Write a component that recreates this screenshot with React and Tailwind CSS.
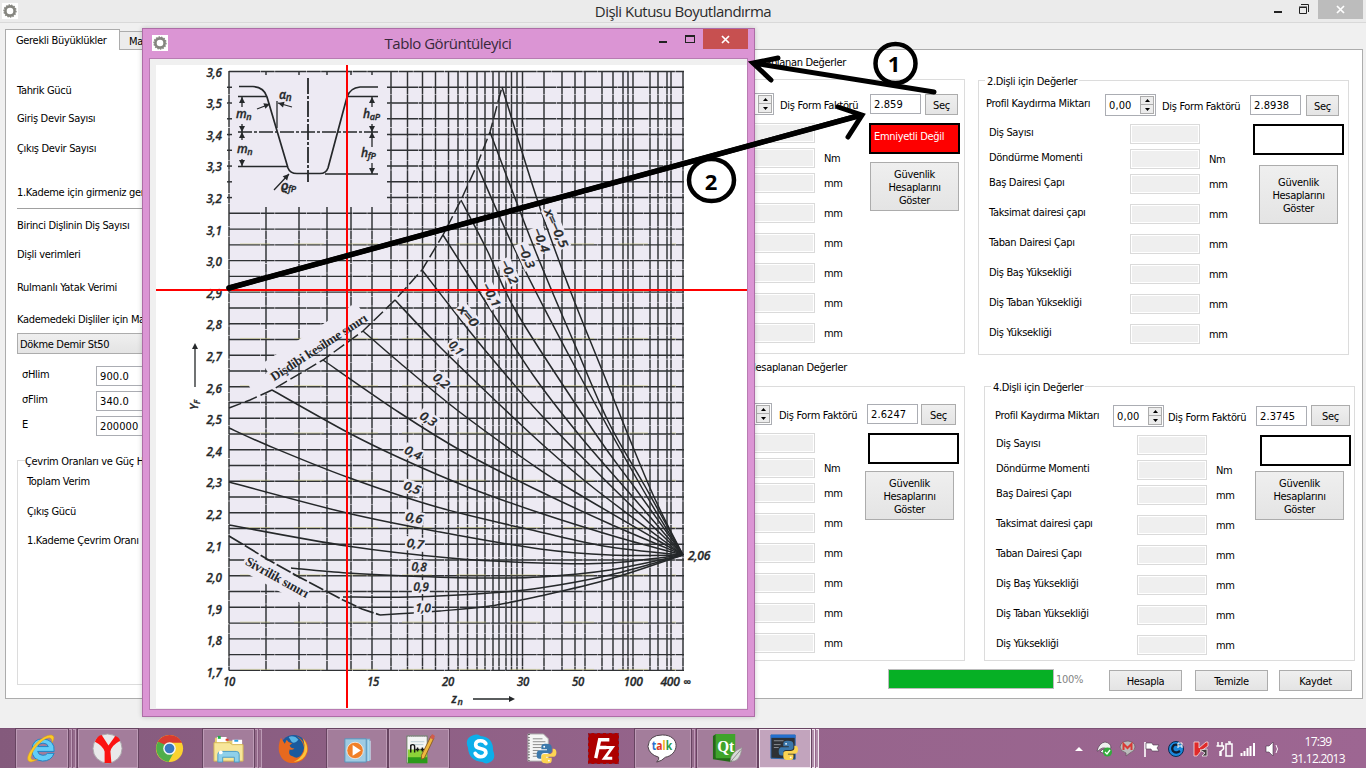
import React from "react";

const ROWS = [
  ["Diş Sayısı", "", "h-[25px]"],
  ["Döndürme Momenti", "Nm", "h-[25px]"],
  ["Baş Dairesi Çapı", "mm", "h-[30px]"],
  ["Taksimat dairesi çapı", "mm", "h-[30px]"],
  ["Taban Dairesi Çapı", "mm", "h-[30px]"],
  ["Diş Baş Yüksekliği", "mm", "h-[30px]"],
  ["Diş Taban Yüksekliği", "mm", "h-[30px]"],
  ["Diş Yüksekliği", "mm", "h-[30px]"],
];

const Label = ({ className = "", children }) => (
  <div className={`h-4 leading-[18px] whitespace-nowrap shrink-0 ${className}`}>{children}</div>
);

const Button = ({ className = "", children }) => (
  <button
    className={`shrink-0 border border-[#acacac] bg-linear-to-b from-[#efefef] to-[#e4e4e4] pt-px text-center leading-[13px] ${className}`}
  >
    {children}
  </button>
);

const TextBox = ({ className = "", children }) => (
  <div className={`h-5 shrink-0 border border-[#abadb3] bg-white pl-[3px] leading-[19px] tracking-[0.1px] ${className}`}>{children}</div>
);

const Spinner = () => (
  <div className="flex h-[22px] w-[51px] shrink-0 border border-[#abadb3] bg-white">
    <div className="w-[34px] shrink-0 pl-[3px] leading-[22px] tracking-[0.1px]">0,00</div>
    <div className="mt-px flex h-[18px] w-[14px] shrink-0 flex-col border border-[#acacac] bg-[#ececec]">
      <div className="flex h-2 items-center justify-center border-b border-[#acacac]">
        <svg width="5" height="3"><path d="M2.5 0L5 3H0z" /></svg>
      </div>
      <div className="flex h-2 items-center justify-center">
        <svg width="5" height="3"><path d="M2.5 3L5 0H0z" /></svg>
      </div>
    </div>
  </div>
);

function GearGroup({ box, legend, top, profile, formLabel, value, pick, labels, units, status, statusText, safety }) {
  return (
    <div className={`relative h-[275px] shrink-0 border border-[#dcdcdc] ${box}`}>
      <Label className="absolute -top-[8px] left-[6px] bg-white px-[2px]">{legend}</Label>
      <div className={`flex h-[22px] items-start ${top}`}>
        <Label className={profile}>Profil Kaydırma Miktarı</Label>
        <Spinner />
        <Label className={`mt-[4px] ${formLabel}`}>Diş Form Faktörü</Label>
        <TextBox className="mt-px w-[51px]">{value}</TextBox>
        <Button className={`h-[21px] ${pick}`}>Seç</Button>
      </div>
      <div className="mt-2 flex items-start">
        <div className={units}>
          {ROWS.map(([name, unit, h]) => (
            <div key={name} className={`flex items-start ${h}`}>
              <Label className={labels}>{name}</Label>
              <div className="h-5 w-[70px] shrink-0 border border-[#dadada] bg-white p-px">
                <div className="h-full bg-[#efefef]" />
              </div>
              <Label className="mt-[2px] ml-[9px]">{unit}</Label>
            </div>
          ))}
        </div>
        <div>
          <div className={`h-[31px] w-[91px] border-2 border-black pl-[3px] leading-[24px] ${status}`}>{statusText}</div>
          <Button className={safety}>
            Güvenlik
            <br />
            Hesaplarını
            <br />
            Göster
          </Button>
        </div>
      </div>
    </div>
  );
}

const Gear = () => (
  <div className="flex h-4 w-4 items-center justify-center bg-white">
    <svg width="16" height="16" viewBox="0 0 16 16">
      <circle cx="8" cy="8" r="4.6" fill="none" stroke="#85857f" strokeWidth="2.6" />
      <circle cx="8" cy="8" r="6" fill="none" stroke="#85857f" strokeWidth="1.4" strokeDasharray="1.5 1.1" />
    </svg>
  </div>
);

/* ---------- diagram ---------- */
const VX = [229, 266, 299, 327, 351, 372, 391, 407.5, 422.5, 435.5, 448.5, 458, 467.5, 477, 485, 493, 499, 506, 511.5, 517, 522.5, 544, 562, 575, 585, 602, 613, 623, 628, 633, 650, 658, 667, 671, 683];
const HY = Array.from({ length: 39 }, (_, i) => 71.5 + i * 15.76);
const CURVES = [
  [[502, 87], [538, 202], [570, 290], [600, 365], [650, 488], [683, 555]],
  [[490, 132], [535, 250], [575, 345], [609, 423], [646, 488], [683, 555]],
  [[477, 165], [515, 250], [573, 363], [642, 488], [683, 555]],
  [[461, 200], [487, 250], [517, 313], [595, 433], [635, 488], [683, 555]],
  [[443, 235], [478, 290], [533, 375], [580, 436], [625, 488], [683, 555]],
  [[422, 270], [467, 328], [500, 368], [543, 417], [613, 488], [683, 555]],
  [[395, 300], [430, 337], [477, 383], [543, 445], [595, 489], [683, 555]],
  [[363, 331], [400, 363], [457, 410], [530, 463], [575, 492], [683, 555]],
  [[323, 360], [400, 413], [465, 453], [533, 488], [610, 524], [683, 555]],
  [[272, 390], [347, 432], [400, 458], [470, 488], [540, 513], [620, 538], [683, 555]],
  [[229, 428], [267, 445], [347, 477], [437, 507], [540, 532], [610, 547], [683, 555]],
  [[229, 482], [347, 513], [440, 532], [540, 549], [610, 555], [683, 555]],
  [[229, 525], [347, 546], [450, 558], [540, 563], [610, 563], [683, 555]],
  [[291, 568], [347, 573], [407, 576], [480, 578], [540, 577], [610, 570], [683, 555]],
  [[343, 597], [410, 597], [490, 593], [540, 588], [610, 575], [683, 555]],
  [[380, 615], [413, 613], [440, 611], [490, 606], [540, 596], [610, 579], [683, 555]],
];
const smooth = (p) => {
  let d = `M${p[0][0]} ${p[0][1]}`;
  for (let i = 0; i < p.length - 1; i++) {
    const a = p[i - 1] || p[i];
    const b = p[i];
    const c = p[i + 1];
    const e = p[i + 2] || c;
    d += `C${b[0] + (c[0] - a[0]) / 6} ${b[1] + (c[1] - a[1]) / 6} ${c[0] - (e[0] - b[0]) / 6} ${c[1] - (e[1] - b[1]) / 6} ${c[0]} ${c[1]}`;
  }
  return d;
};
const YL = ["3,6", "3,5", "3,4", "3,3", "3,2", "3,1", "3,0", "2,9", "2,8", "2,7", "2,6", "2,5", "2,4", "2,3", "2,2", "2,1", "2,0", "1,9", "1,8", "1,7"];
const XL = [["10", 229], ["15", 373], ["20", 448], ["30", 523], ["50", 578], ["100", 633], ["400", 670]];
const TAGS = [
  ["x=−0,5", 556, 228, 66, 44], ["−0,4", 541, 240, 68, 28], ["−0,3", 526, 256, 66, 28], ["−0,2", 509, 272, 64, 28], ["−0,1", 491, 295, 62, 28],
  ["x=0", 468, 316, 50, 27], ["0,1", 456, 348, 46, 18], ["0,2", 441, 381, 40, 20], ["0,3", 428, 419, 32, 20], ["0,4", 413, 453, 26, 20],
  ["0,5", 412, 488, 20, 20], ["0,6", 414, 518, 12, 20], ["0,7", 415, 544, 6, 20], ["0,8", 419, 567, 4, 18], ["0,9", 421, 587, 2, 18], ["1,0", 423, 608, 2, 18],
];

const Tip = ({ x, y, r }) => <path d="M0 0L-3 -6H3z" transform={`translate(${x} ${y}) rotate(${r})`} />;

function Diagram() {
  const ink = "#25282a";
  return (
    <svg width="591" height="643" viewBox="156 65 591 643" className="block bg-white font-['Open_Sans',sans-serif]">
      <rect x="229" y="71" width="455" height="600" fill="#edeaf3" />
      <g stroke={ink} strokeWidth="1.45" opacity="0.95">
        {VX.map((x) => <line key={x} x1={x} x2={x} y1={x > 229 && x < 385 ? 207 : 71} y2="670.5" strokeDasharray="23 0.6 9 0.5" />)}
        {HY.map((y) => <line key={y} x1={y < 205 && y > 73 ? 387 : 229} x2="684" y1={y} y2={y} strokeDasharray="31 0.6 14 0.5" />)}
        {HY.slice(1, 9).map((y) => <line key={y} x1="227" x2="232" y1={y} y2={y} />)}
        {[266, 299, 327, 351, 372].map((x) => <line key={x} x1={x} x2={x} y1="71" y2="75" />)}
      </g>
      <g stroke="#c9c77b" strokeWidth="1" opacity="0.5" strokeDasharray="30 24">
        {HY.filter((_, i) => i % 3 === 2 && i > 9).map((y) => <line key={y} x1="240" x2="676" y1={y - 1} y2={y - 1} />)}
      </g>
      <g fill="#edeaf3">
        <rect x="263" y="330" width="112" height="20" transform="rotate(-33 319 348)" />
        <rect x="250" y="375" width="30" height="18" transform="rotate(-28 265 384)" />
        <rect x="240" y="567" width="72" height="21" transform="rotate(29 276 577)" />
      </g>
      <g fill="none" stroke={ink} strokeWidth="1.5">
        {CURVES.map((c, i) => <path key={i} d={smooth(c)} />)}
        <polyline points="229,408 250,400 272,390 323,360 363,331 395,300 422,270 443,235 461,200 477,165 490,132 502,87" strokeDasharray="13 4" />
        <polyline points="229,536 267,559 299,577 343,600 362,609 380,615" strokeDasharray="16 2.5" strokeWidth="1.7" />
      </g>
      <g fill={ink} stroke={ink} strokeWidth="0.3" fontSize="12" fontStyle="italic" fontWeight="600" textAnchor="middle">
        {TAGS.map(([t, x, y, r, w]) => (
          <g key={t} transform={`translate(${x} ${y}) rotate(${r})`}>
            <rect x={-w / 2} y="-7" width={w} height="14" fill="#edeaf3" stroke="none" />
            <text y="4" textLength={w - 3} lengthAdjust="spacingAndGlyphs">{t}</text>
          </g>
        ))}
        {YL.map((t, i) => <text key={t} x="214" y={76.5 + i * 31.6} textLength="15" lengthAdjust="spacingAndGlyphs">{t}</text>)}
        {XL.map(([t, x]) => <text key={t} x={x} y="686" textLength={t.length > 2 ? 19 : 12} lengthAdjust="spacingAndGlyphs">{t}</text>)}
        <text x="687" y="686" fontSize="11">∞</text>
        <text x="699" y="560" textLength="22" lengthAdjust="spacingAndGlyphs">2,06</text>
        <text x="454" y="703" fontSize="12">z</text>
        <text x="460" y="705" fontSize="9">n</text>
        <text x="194" y="409" fontSize="11" transform="rotate(-90 194 405)">Y<tspan fontSize="8" dy="2">F</tspan></text>
      </g>
      <g fill={ink} className="font-['Liberation_Serif',serif]" fontWeight="700" fontSize="13" textAnchor="middle">
        <text transform="translate(321 351) rotate(-33)" textLength="112">Dişdibi kesilme sınırı</text>
        <text transform="translate(275 581) rotate(29)" textLength="70">Sivrilik sınırı</text>
      </g>
      <g fill="none" stroke={ink} strokeWidth="1.3">
        <path d="M195 387V346M473 699H510" />
        <path d="M239 86.5H253Q264 87 267 97L288 168Q290 173.5 297 173.5H320Q326 173.5 328 168L347 97Q350 88 360 87H378" strokeWidth="1.7" />
        <path d="M238 96.5H267M347 96.5H378M238 166.5H287M325 174H378" />
        <path d="M238 132H378" strokeDasharray="14 2 3 2" />
        <path d="M308 78V182" strokeDasharray="16 2 3 2" strokeWidth="1.8" />
        <path d="M242 107V97M242 124V140M242 159V166M372 107V97M372 124V147M372 163V174" />
        <path d="M257 109L270 104M292 107L278 103M274 190L289 174M277 101V128" />
      </g>
      <g fill={ink}>
        <Tip x={195} y={343} r={180} />
        <Tip x={515} y={699} r={-90} />
        <Tip x={242} y={97} r={180} /><Tip x={372} y={97} r={180} />
        <Tip x={242} y={132} r={0} /><Tip x={372} y={132} r={0} />
        <Tip x={242} y={132} r={180} /><Tip x={372} y={132} r={180} />
        <Tip x={242} y={166} r={0} /><Tip x={372} y={174} r={0} />
        <Tip x={270} y={104} r={-110} /><Tip x={278} y={103} r={105} /><Tip x={289} y={174} r={-137} />
      </g>
      <g fill={ink} stroke={ink} strokeWidth="0.3" fontStyle="italic" fontWeight="600" fontSize="12">
        <text x="236" y="118">m<tspan fontSize="9" dy="2">n</tspan></text>
        <text x="237" y="153">m<tspan fontSize="9" dy="2">n</tspan></text>
        <text x="279" y="99">α<tspan fontSize="10" dy="2">n</tspan></text>
        <text x="363" y="118">h<tspan fontSize="9" dy="2">aP</tspan></text>
        <text x="361" y="157">h<tspan fontSize="9" dy="2">fP</tspan></text>
        <text x="281" y="190">ϱ<tspan fontSize="9" dy="2">fP</tspan></text>
      </g>
      <path d="M156 290H747M347 65V708" stroke="#fe0000" strokeWidth="2" />
    </svg>
  );
}

/* ---------- taskbar icons ---------- */
const Python = ({ x = 0, y = 0, s = 1 }) => (
  <g transform={`translate(${x} ${y}) scale(${s})`}>
    <path d="M10 0C6 0 5 1 5 4V6H11V7H3C1 7 0 9 0 12S1 16 3 16H5V13C5 11 6 10 8 10H13C15 10 16 9 16 7V4C16 1 14 0 10 0z" fill="#3b77ab" />
    <path d="M11 21C15 21 16 20 16 17V15H10V14H18C20 14 21 12 21 9.500S20 5.500 18 5.500H17V8C17 10 15 11 13 11H8C6 11 5 12 5 14V17C5 20 7 21 11 21z" fill="#fcd452" />
    <circle cx="8" cy="3.300" r="1" fill="#fff" /><circle cx="13" cy="18" r="1" fill="#fff" />
  </g>
);

const ICONS = {
  ie: (
    <>
      <path d="M29 19H12Q13 23 17.500 23Q21 23 22 21H29Q26 29 17 29Q6 28 6 17Q7 6 17 6Q30 7 29 19zM12 14H23Q22 10.500 17.500 10.500Q13 10.500 12 14z" fill="#63cdf7" stroke="#1f83c4" />
      <path d="M27 10Q31 3 26 2Q19 2 10 11Q0 23 2 28Q4 32 12 27Q5 29 5 25Q7 16 17 8Q27 1 27 10z" fill="#fbc926" stroke="#d99b12" strokeWidth=".5" />
    </>
  ),
  yandex: (
    <>
      <circle cx="16" cy="16" r="15" fill="#e9e9ea" stroke="#a9a4a9" />
      <path d="M3 9Q6 2 10 2L17 13L24 3Q28 4 29 8Q20 13 19 19L20 31H13V19Q11 13 3 9z" fill="#fb1312" />
    </>
  ),
  chrome: (
    <>
      <circle cx="16" cy="16" r="14" fill="#fbd22f" />
      <path d="M16 16L4 9Q8 2 16 2Q25 2 29 10H16z" fill="#d93b2f" />
      <path d="M4 9Q0 17 5 24Q9 29 15 30L21 19L16 16z" fill="#4fae4a" />
      <path d="M4 9L11 20L16 14z" fill="#4fae4a" />
      <circle cx="16" cy="16" r="6.500" fill="#f3f5f7" /><circle cx="16" cy="16" r="5" fill="#3778c2" />
    </>
  ),
  explorer: (
    <>
      <path d="M2 5H12L14 8H30V29H2z" fill="#e5cf75" /><path d="M4 4H14V10H4zM20 7H30V12H20z" fill="#fff" />
      <path d="M5 3H8V6H5z" fill="#20b14a" /><path d="M13 6H16V8H13z" fill="#e33b28" /><path d="M22 7H26V9H22z" fill="#2ba2e0" />
      <path d="M1 10H17L20 12H31V29H1z" fill="#f7e69a" stroke="#d6b856" />
      <path d="M5 30V22Q5 19 8 19H24Q27 19 27 22V30H22V25H10V30z" fill="#8fd0ea" stroke="#4b9cc6" />
      <circle cx="8" cy="20" r="2" fill="#fff" />
    </>
  ),
  firefox: (
    <>
      <circle cx="16" cy="16" r="14" fill="#1a5a9d" />
      <path d="M19 3Q31 9 25 21Q21 28 15 24Q10 23 12 17Q15 18 17 16Q13 16 12 13L15 10Q11 11 9 7L7 11L3 5Q0 12 1 19Q4 31 16 31Q29 30 31 17Q31 9 25 5Q29 11 27 16Q26 8 19 3z" fill="#e7691e" />
      <path d="M26 6Q31 12 30 19Q27 29 16 30Q24 26 27 19Q28 12 26 6z" fill="#fbc53a" />
      <path d="M11 4Q17 2 21 7Q17 12 14 9z" fill="#58b4e4" />
    </>
  ),
  wmp: (
    <>
      <path d="M8 6H30V29L8 30z" fill="#79b7d8" /><path d="M4 6H26V30H4z" fill="#9fcbe2" stroke="#5893ba" />
      <path d="M28 7V29M30 8V28" stroke="#d1ecf8" />
      <circle cx="14.500" cy="18" r="8.500" fill="#f08028" stroke="#fff" strokeWidth=".7" /><path d="M12 12.500L20.500 18L12 23.500z" fill="#fff" />
    </>
  ),
  npp: (
    <>
      <path d="M4 3H25V31H4z" fill="#f4f6f5" stroke="#6a7b65" /><path d="M5 17H25V31H5z" fill="#8cd238" /><path d="M5 25H25V31H5z" fill="#2b9a1a" />
      <path d="M4 3H25" stroke="#888" strokeWidth="2" strokeDasharray="1 1" /><path d="M8 9H22M8 12H21" stroke="#b9ccd3" />
      <path d="M8 20V12M8 14Q8 12 10 12T12 14V20M13 17H17M15 15V19M18 17H22M20 15V19" fill="none" stroke="#151515" strokeWidth="1.500" />
      <path d="M29 3L32 5L22 26L19 27V23z" fill="#efb83f" stroke="#8b5f24" /><path d="M28 5L31 7L33 3L30 1z" fill="#d15b4c" />
    </>
  ),
  skype: (
    <>
      <path d="M9 2Q13 1 16 3Q29 4 29 18Q33 28 24 31Q21 32 18 30Q4 29 3 15Q-1 5 9 2z" fill="#0daeea" />
      <path d="M21.500 11Q20 8 16 8Q11 8 11 12Q11 15 16 16Q22 17 21.500 21Q20 24.500 16 24.500Q12 24 10.500 21" fill="none" stroke="#fff" strokeWidth="3.800" strokeLinecap="round" />
    </>
  ),
  pyfile: (
    <>
      <path d="M2 1H18L23 6V29H2z" fill="#f5f5f5" stroke="#aaa" /><path d="M3 1V29" stroke="#666" strokeWidth="2" strokeDasharray="1 2" />
      <path d="M7 6H17M7 9H20M7 12H20M7 15H16M7 18H13M7 21H12M7 24H12" stroke="#888" />
      <Python x={11} y={11} s={0.97} />
    </>
  ),
  filezilla: (
    <>
      <path d="M0 0H32V32H0z" fill="#ad0000" /><path d="M.5.5H31.500V31.500H.5z" fill="none" stroke="#7b2c4b" strokeDasharray="3 3" />
      <path d="M8 26L12 7H22M10 15H19" fill="none" stroke="#fff" strokeWidth="3.500" /><path d="M17 15H25L17 26H25" fill="none" stroke="#fff" strokeWidth="3" />
    </>
  ),
  talk: (
    <>
      <path d="M16 2C25 2 30 7 30 13S25 24 19 25Q15 29 10 30Q13 27 12 25Q2 22 1 14Q2 2 16 2z" fill="#fff" stroke="#4b4048" />
      <text x="15.500" y="18" fontSize="13" fontWeight="700" textAnchor="middle" textLength="21" lengthAdjust="spacingAndGlyphs" className="font-['Open_Sans',sans-serif] tracking-[0px]">
        <tspan fill="#2a71d0">t</tspan><tspan fill="#dc3527">a</tspan><tspan fill="#efb11b">l</tspan><tspan fill="#2a9b48">k</tspan>
      </text>
    </>
  ),
  qt: (
    <>
      <path d="M2 3L5 1V25L2 27zM2 27L5 25H24L21 30z" fill="#236b18" /><path d="M5 1H25V26H5z" fill="#3fa42b" />
      <text x="15" y="20" fontSize="18" fontWeight="700" fill="#fff" textAnchor="middle" className="font-['Liberation_Serif',serif]" textLength="17" lengthAdjust="spacingAndGlyphs">Qt</text>
      <path d="M32 15Q20 20 20 29Q30 31 32 15z" fill="#d9dad8" stroke="#8e8e8b" strokeWidth=".7" /><path d="M31 17L19 31" stroke="#8e8e8b" />
    </>
  ),
  console: (
    <>
      <path d="M2 2H27V27L2 26z" fill="#2e3136" stroke="#2d6bb4" /><path d="M2 2H27V5H2z" fill="#246fce" /><path d="M5 8H15M5 12H12M5 15H10" stroke="#8d9298" />
      <Python x={10} y={8} s={0.95} />
    </>
  ),
};

const TASKS = [
  ["ie", "ml-4 w-[60px]", 2], ["yandex", "ml-[2px] w-[60px]", 0], ["chrome", "ml-[2px] w-[60px]", -1],
  ["explorer", "ml-[3px] w-[59px]", 2], ["firefox", "ml-[2px] w-[60px]", -1], ["wmp", "ml-[3px] w-[60px]", 0],
  ["npp", "ml-[2px] w-[60px]", 0], ["skype", "ml-px w-[61px]", -1], ["pyfile", "ml-px w-[60px]", -1],
  ["filezilla", "ml-[2px] w-[60px]", -1], ["talk", "ml-px w-[60px]", 1], ["qt", "ml-[2px] w-[60px]", 0], ["console", "ml-[2px] w-[60px]", 2],
];

function Taskbar() {
  return (
    <div className="flex h-10 shrink-0 border-t border-[#7c5275] bg-linear-to-r from-[#845a7c] via-[#95648b] to-[#9d6692]">
      {TASKS.map(([id, cls, stack]) => {
        const active = id === "console";
        const edge = active ? "border-[#f2e6f0]" : "border-[#bd9bb6]";
        const strip = active ? "bg-[#b08eaa]" : "bg-[#946b8b]";
        return (
          <div key={id} className={`flex h-[39px] shrink-0 ${cls}`}>
            <div
              className={`flex h-full min-w-0 flex-1 items-center justify-center ${stack >= 0 ? `border ${edge} outline outline-[#674461] ${active ? "bg-[#c2a4bd]" : "bg-[#a37d9b]"}` : ""}`}
            >
              <svg width="32" height="32" viewBox="0 0 33 33" className="shrink-0">{ICONS[id]}</svg>
            </div>
            {stack > 0 && <div className={`ml-px h-full w-[3px] border-y border-r ${edge} ${strip}`} />}
            {stack > 1 && <div className={`ml-px h-full w-[3px] border-y border-r ${edge} ${strip}`} />}
          </div>
        );
      })}
      <div className="ml-[254px] flex w-[206px] items-center">
        <svg width="206" height="20" viewBox="0 0 206 20">
          <path d="M2 12L6 8L10 12z" fill="#fff" />
          <path d="M24 12Q26 4 32 3Q38 4 38 9L34 10Q30 7 25 12zM27 13L30 10L33 15z" fill="#eee" stroke="#544352" strokeWidth=".7" />
          <circle cx="34.500" cy="13" r="4.500" fill="#32ab3c" /><path d="M32 13L34 15L37 11" fill="none" stroke="#fff" strokeWidth="1.300" />
          <path d="M47 8Q48 2 55 2Q62 3 62 8Q62 12 57 14L53 17V14Q47 12 47 8z" fill="#bbb" stroke="#675662" strokeWidth=".7" />
          <path d="M50.500 11V5L54.500 9L58.500 5V11" fill="none" stroke="#d93a36" strokeWidth="2" />
          <path d="M72 3V18" stroke="#fff" strokeWidth="1.600" /><path d="M73 4H79L80 6H86L84 9L86 12H79L78 10H73z" fill="#fff" stroke="#46354a" strokeWidth=".6" />
          <circle cx="103" cy="10" r="7.500" fill="#1a88dc" stroke="#0b2b4f" /><path d="M106 7Q104 5 101 6Q98 9 100 12Q103 15 107 12" fill="none" stroke="#101d31" strokeWidth="2.300" /><path d="M105 9V4H109V9M105 7H109" fill="none" stroke="#fff" />
          <path d="M121 3H126V9L133 3H135V7L128 12L124 17H121z" fill="#e02a2a" stroke="#f6dede" strokeWidth=".8" /><path d="M127 11L134 10V17H129L132 14z" fill="#413c3d" stroke="#eee" strokeWidth=".8" />
          <path d="M145 3V7M149 3V7M143.500 7H150.500V10L148 12V17M147 12V17" stroke="#fff" strokeWidth="1.500" fill="none" /><path d="M153 5H159V17H153zM155 3H157V5" fill="none" stroke="#fff" strokeWidth="1.500" />
          <path d="M168.500 17V14M171.500 17V12M174.500 17V9M177.500 17V7M181 17V4" stroke="#fff" strokeWidth="2" />
          <path d="M193 7H196L200 3V17L196 13H193z" fill="#fff" stroke="#46354a" strokeWidth=".6" /><path d="M203 6Q206 10 203 14" stroke="#fff" fill="none" />
        </svg>
      </div>
      <div className="ml-[9px] flex w-[60px] flex-col items-center pt-[4px] font-['Open_Sans',sans-serif] text-[12px] leading-[17px] tracking-[-0.75px] text-white">
        <span>17:39</span>
        <span>31.12.2013</span>
      </div>
    </div>
  );
}

function ChartDialog() {
  return (
    <div className="absolute top-[28px] left-[142px] flex h-[689px] w-[613px] flex-col border border-[#ad6da6] bg-[#db95d4] px-[6px] shadow-[0_0_5px_rgba(0,0,0,0.2)]">
      <div className="flex h-[29px] items-start">
        <div className="mt-[6px] ml-[3px]"><Gear /></div>
        <div className="mt-[3px] flex-1 pl-[69px] text-center font-['Open_Sans',sans-serif] text-[15px] leading-[22px] tracking-[-0.48px] text-[#38293a]">Tablo Görüntüleyici</div>
        <div className="mt-[12px] h-[2px] w-2 bg-[#222]" />
        <div className="mt-[6px] ml-[18px] h-2 w-[10px] border border-t-2 border-[#222]" />
        <div className="ml-[8px] flex h-5 w-[45px] items-center justify-center bg-[#c75050]">
          <svg width="9" height="9"><path d="M1 1L8 8M8 1L1 8" stroke="#fff" strokeWidth="1.700" /></svg>
        </div>
      </div>
      <div className="h-[652px] border border-[#b87bb2] bg-[#f0f0f0] pt-[6px] pl-[6px]"><Diagram /></div>
    </div>
  );
}

const Annotations = () => (
  <svg width="1366" height="768" className="pointer-events-none absolute top-0 left-0 font-['Open_Sans',sans-serif]">
    <g fill="none" stroke="#000" strokeWidth="5.5" strokeLinecap="round">
      <path d="M229 288L861 115M838 107L862 115L848 137M934 92L753 63M778 58L753 63L771 80" strokeWidth="5" />
      <path d="M229 288L858 116" />
      <ellipse cx="711.500" cy="180" rx="22.500" ry="21" strokeWidth="4.500" />
      <ellipse cx="895.500" cy="63.500" rx="20" ry="19.500" strokeWidth="4.500" />
    </g>
    <g fontSize="22" fontWeight="700" textAnchor="middle">
      <text x="711" y="189.500">2</text>
      <text x="894" y="72">1</text>
    </g>
  </svg>
);

export default function App() {
  return (
    <div className="relative flex h-[768px] w-[1366px] flex-col overflow-hidden bg-[#f0f0f0] font-['DejaVu_Sans_Condensed',sans-serif] text-[11px] tracking-[-0.32px] text-black">
      <div className="flex h-[23px] shrink-0 items-start border-b border-[#d9d9d9] bg-[#ebebeb]">
        <div className="mt-[3px] ml-[2px] w-4"><Gear /></div>
        <div className="flex-1 pl-[74px] text-center font-['Open_Sans',sans-serif] text-[15px] leading-[23px] tracking-[-0.52px] text-[#2b2b2b]">Dişli Kutusu Boyutlandırma</div>
        <div className="mt-[11px] h-[2px] w-2 bg-[#222]" />
        <svg width="10" height="10" className="mt-[4px] ml-[17px]"><path d="M.5 3.500H7.500V9.500H.5zM0 3H8M2 .5H9.500V8" fill="none" stroke="#222" /></svg>
        <div className="mr-[3px] ml-[9px] flex h-[19px] w-[45px] items-center justify-center bg-[#bcbcbc]">
          <svg width="9" height="9"><path d="M1 1L8 8M8 1L1 8" stroke="#fff" strokeWidth="1.700" /></svg>
        </div>
      </div>

      <div className="flex h-[26px] shrink-0 items-end pl-[5px]">
        <div className="z-10 -mb-px h-[21px] w-[115px] border border-b-0 border-[#acacac] bg-white pl-[10px] leading-[21px]">Gerekli Büyüklükler</div>
        <div className="h-[18px] w-[110px] border border-b-0 border-l-0 border-[#acacac] bg-[#ececec] pl-[9px] leading-[20px]">Malzeme</div>
      </div>

      <div className="ml-[5px] flex h-[650px] w-[1358px] shrink-0 border border-[#acacac] bg-white">
        <div className="flex w-[589px] shrink-0 flex-col pl-[11px]">
          <Label className="mt-[32px]">Tahrik Gücü</Label>
          <Label className="mt-[12px]">Giriş Devir Sayısı</Label>
          <Label className="mt-[14px]">Çıkış Devir Sayısı</Label>
          <Label className="mt-[28px]">1.Kademe için girmeniz gereken değerler</Label>
          <div className="mt-2 h-px w-[420px] bg-[#a0a0a0]" />
          <Label className="mt-2">Birinci Dişlinin Diş Sayısı</Label>
          <Label className="mt-[13px]">Dişli verimleri</Label>
          <Label className="mt-[17px]">Rulmanlı Yatak Verimi</Label>
          <Label className="mt-[16px]">Kademedeki Dişliler için Malzeme</Label>
          <Button className="mt-[6px] h-[21px] w-[200px] pl-[2px] text-left!">Dökme Demir St50</Button>
          <div className="mt-[12px] flex flex-col gap-[5px] pl-[5px]">
            {[["σHlim", "900.0"], ["σFlim", "340.0"], ["E", "200000"]].map(([k, v]) => (
              <div key={k} className="flex">
                <Label className="w-[74px]">{k}</Label>
                <TextBox className="w-[120px]">{v}</TextBox>
              </div>
            ))}
          </div>
          <div className="relative mt-[24px] h-[225px] w-[440px] border border-[#dcdcdc] pl-[9px]">
            <Label className="absolute -top-[8px] left-[7px] bg-white">Çevrim Oranları ve Güç Hesapları</Label>
            <Label className="mt-[12px]">Toplam Verim</Label>
            <Label className="mt-[14px]">Çıkış Gücü</Label>
            <Label className="mt-[13px]">1.Kademe Çevrim Oranı</Label>
          </div>
        </div>

        <div className="flex flex-col">
          <div className="flex items-start gap-[13px]">
            <div className="flex flex-col">
              <Label className="mt-1 w-[251px] text-right">1.Kademe için Hesaplanan Değerler</Label>
              <GearGroup
                box="mt-[9px] w-[370px]" legend="1.Dişli için Değerler" top="mt-[13px]" profile="ml-[7px] w-[120px] mt-[2px]"
                formLabel="ml-[6px] w-[90px]" value="2.859" pick="mt-px ml-[4px] w-[33px]" labels="ml-[10px] w-[139px]" units="w-[273px]"
                status="bg-[#fe0000] text-white" statusText="Emniyetli Değil" safety="mt-[8px] ml-px h-[49px] w-[89px]"
              />
              <Label className="mt-[5px] w-[252px] text-right">2.Kademe için Hesaplanan Değerler</Label>
              <GearGroup
                box="mt-[11px] w-[370px]" legend="3.Dişli için Değerler" top="mt-[16px]" profile="ml-[7px] w-[118px] mt-[2px]"
                formLabel="ml-[7px] w-[88px]" value="2.6247" pick="mt-px ml-[3px] w-[35px]" labels="ml-[10px] w-[139px]" units="w-[272px]"
                status="" statusText="" safety="mt-[7px] -ml-[3px] h-[49px] w-[89px]"
              />
            </div>
            <div className="flex flex-col">
              <GearGroup
                box="mt-[30px] w-[371px]" legend="2.Dişli için Değerler" top="mt-[13px]" profile="ml-[7px] w-[119px] mt-[1px]"
                formLabel="ml-[6px] w-[88px]" value="2.8938" pick="mt-px ml-[5px] w-[33px]" labels="ml-[10px] w-[141px]" units="w-[274px]"
                status="" statusText="" safety="mt-[10px] ml-[6px] h-[59px] w-[79px]"
              />
              <GearGroup
                box="mt-[31px] ml-[6px] w-[371px]" legend="4.Dişli için Değerler" top="mt-[18px]" profile="ml-[10px] w-[118px] mt-[2px]"
                formLabel="ml-[4px] w-[88px]" value="2.3745" pick="ml-[4px] w-[39px]" labels="ml-[11px] w-[141px]" units="w-[275px]"
                status="" statusText="" safety="mt-[5px] -ml-[5px] h-[49px] w-[89px]"
              />
            </div>
          </div>
          <div className="mt-[8px] ml-[293px] flex items-start">
            <div className="h-5 w-[166px] border border-[#bcbcbc] bg-[#06b025]" />
            <Label className="mt-[2px] ml-[2px] w-[53px] text-[#838383]">100%</Label>
            <Button className="mt-px h-[21px] w-[73px]">Hesapla</Button>
            <Button className="mt-px ml-[13px] h-[21px] w-[73px]">Temizle</Button>
            <Button className="mt-px ml-[11px] h-[21px] w-[73px]">Kaydet</Button>
          </div>
        </div>
      </div>

      <div className="flex-1" />
      <Taskbar />
      <ChartDialog />
      <Annotations />
    </div>
  );
}
